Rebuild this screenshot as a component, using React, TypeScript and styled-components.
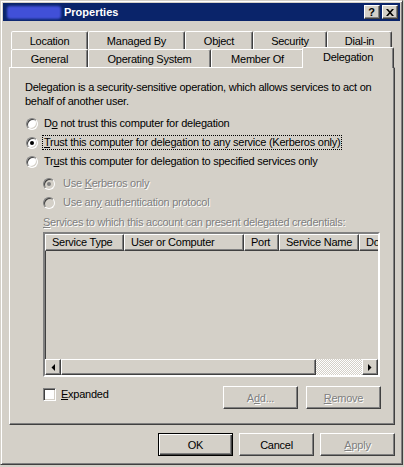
import React from 'react'
import styled, { createGlobalStyle, css } from 'styled-components'

const FACE = '#d4d0c8'
const SHADOW = '#808080'
const DARK = '#404040'
const HILITE = '#ffffff'
const CAPTION = '#0a246a'

const GlobalStyle = createGlobalStyle`
  html, body {
    margin: 0;
    padding: 0;
    background: ${FACE};
  }
  body {
    font-family: 'Liberation Sans', Arial, sans-serif;
    font-size: 11px;
    letter-spacing: -0.25px;
    color: #000;
  }
  * {
    box-sizing: border-box;
  }
`

const raised = css`
  border: 1px solid;
  border-color: ${HILITE} ${DARK} ${DARK} ${HILITE};
  box-shadow: inset -1px -1px ${SHADOW};
  background: ${FACE};
`

const sunken = css`
  border: 1px solid;
  border-color: ${SHADOW} ${HILITE} ${HILITE} ${SHADOW};
  box-shadow: inset 1px 1px ${DARK}, inset -1px -1px ${FACE};
`

const disabledText = css`
  color: ${SHADOW};
  text-shadow: 1px 1px 0 ${HILITE};
`

const rowOne = [
  { label: 'Location', width: 77 },
  { label: 'Managed By', width: 97 },
  { label: 'Object', width: 68 },
  { label: 'Security', width: 74 },
  { label: 'Dial-in', width: 65 },
]

const rowTwo = [
  { label: 'General', width: 77 },
  { label: 'Operating System', width: 123 },
  { label: 'Member Of', width: 93 },
  { label: 'Delegation', width: 88, active: true },
]

// last column is cut off by the list edge, as in the dialog
const columns = [
  { label: 'Service Type', width: 79 },
  { label: 'User or Computer', width: 120 },
  { label: 'Port', width: 35 },
  { label: 'Service Name', width: 80 },
  { label: 'Domain', width: 80 },
]

function Radio({ checked, disabled }: { checked?: boolean; disabled?: boolean }) {
  return (
    <RadioCircle $disabled={disabled}>
      {checked && <RadioDot $disabled={disabled} />}
    </RadioCircle>
  )
}

function Arrow({ dir }: { dir: 'left' | 'right' }) {
  return (
    <svg width="4" height="7" viewBox="0 0 4 7">
      {dir === 'left' ? <polygon points="4,0 4,7 0.5,3.5" fill="#000" /> : <polygon points="0,0 0,7 3.5,3.5" fill="#000" />}
    </svg>
  )
}

export default function App() {
  return (
    <>
      <GlobalStyle />
      <Window>
        <TitleBar>
          <Redacted />
          <TitleText>Properties</TitleText>
          <CaptionButtons>
            <CaptionButton>?</CaptionButton>
            <CaptionButton>
              <svg width="8" height="7" viewBox="0 0 8 7">
                <path d="M0 0h2l2 2.3L6 0h2L5 3.5 8 7H6L4 4.7 2 7H0l3-3.5z" fill="#000" />
              </svg>
            </CaptionButton>
          </CaptionButtons>
        </TitleBar>

        <Body>
          <TabStrip>
            <TabRow>
              {rowOne.map((t) => (
                <Tab key={t.label} $width={t.width}>
                  {t.label}
                </Tab>
              ))}
            </TabRow>
            <TabRow>
              {rowTwo.map((t) => (
                <Tab key={t.label} $width={t.width} $active={t.active}>
                  {t.label}
                </Tab>
              ))}
            </TabRow>
          </TabStrip>

          <Panel>
            <Description>
              Delegation is a security-sensitive operation, which allows services to act on behalf of another user.
            </Description>

            <Options>
              <Option>
                <Radio />
                <OptionText>
                  D<u>o</u> not trust this computer for delegation
                </OptionText>
              </Option>
              <Option>
                <Radio checked />
                <OptionText $focused>
                  <u>T</u>rust this computer for delegation to any service (Kerberos only)
                </OptionText>
              </Option>
              <Option>
                <Radio />
                <OptionText>
                  Tr<u>u</u>st this computer for delegation to specified services only
                </OptionText>
              </Option>
            </Options>

            <SubOptions>
              <Option $nested>
                <Radio checked disabled />
                <OptionText $disabled>
                  Use <u>K</u>erberos only
                </OptionText>
              </Option>
              <Option $nested>
                <Radio disabled />
                <OptionText $disabled>
                  Use an<u>y</u> authentication protocol
                </OptionText>
              </Option>
            </SubOptions>

            <ListLabel>
              <u>S</u>ervices to which this account can present delegated credentials:
            </ListLabel>

            <ListView>
              <ListHeader>
                {columns.map((c) => (
                  <HeaderCell key={c.label} $width={c.width}>
                    {c.label}
                  </HeaderCell>
                ))}
              </ListHeader>
              <ListBody />
              <HScroll>
                <ScrollButton>
                  <Arrow dir="left" />
                </ScrollButton>
                <ScrollThumb />
                <ScrollTrack />
                <ScrollButton>
                  <Arrow dir="right" />
                </ScrollButton>
              </HScroll>
            </ListView>

            <PanelFooter>
              <CheckLabel>
                <CheckBox />
                <span>
                  <u>E</u>xpanded
                </span>
              </CheckLabel>
              <ButtonGroup $gap={8}>
                <PushButton disabled>
                  A<u>d</u>d...
                </PushButton>
                <PushButton disabled>
                  <u>R</u>emove
                </PushButton>
              </ButtonGroup>
            </PanelFooter>
          </Panel>

          <DialogButtons>
            <ButtonGroup $gap={6}>
              <PushButton $default>OK</PushButton>
              <PushButton>Cancel</PushButton>
              <PushButton disabled>
                <u>A</u>pply
              </PushButton>
            </ButtonGroup>
          </DialogButtons>
        </Body>
      </Window>
    </>
  )
}

const Window = styled.div`
  width: 403px;
  height: 465px;
  padding: 2px;
  border: 1px solid;
  border-color: ${FACE} ${DARK} ${DARK} ${FACE};
  box-shadow: inset 1px 1px ${HILITE}, inset -1px -1px ${SHADOW};
  background: ${FACE};
  display: flex;
  flex-direction: column;
`

const TitleBar = styled.div`
  height: 18px;
  background: ${CAPTION};
  display: flex;
  align-items: center;
`

const Redacted = styled.span`
  width: 54px;
  height: 13px;
  margin-left: 4px;
  background: #4150d8;
  border-radius: 3px;
  filter: blur(1px);
`

const TitleText = styled.span`
  margin-left: 3px;
  color: #fff;
  font-weight: bold;
  font-size: 11px;
  letter-spacing: 0;
`

const CaptionButtons = styled.div`
  margin-left: auto;
  margin-right: 2px;
  display: flex;
  gap: 2px;
`

const CaptionButton = styled.div`
  ${raised}
  width: 16px;
  height: 14px;
  display: flex;
  align-items: center;
  justify-content: center;
  font-weight: bold;
  font-size: 11px;
  line-height: 12px;
  padding-right: 1px;
`

const Body = styled.div`
  flex: 1;
  display: flex;
  flex-direction: column;
  padding: 10px 5px 0 6px;
`

const TabStrip = styled.div`
  padding-left: 2px;
`

const TabRow = styled.div`
  display: flex;
  height: 18px;
`

const Tab = styled.div<{ $width: number; $active?: boolean }>`
  flex: none;
  width: ${(p) => p.$width}px;
  height: 18px;
  padding-top: 2px;
  line-height: 14px;
  text-align: center;
  white-space: nowrap;
  background: ${FACE};
  border: 1px solid;
  border-bottom: none;
  border-color: ${HILITE} ${DARK} transparent ${HILITE};
  border-radius: 2px 2px 0 0;
  box-shadow: inset -1px 0 ${SHADOW};

  ${(p) =>
    p.$active &&
    css`
      position: relative;
      z-index: 1;
      width: ${p.$width + 4}px;
      height: 21px;
      margin: -2px -2px 0;
    `}
`

const Panel = styled.div`
  height: 358px;
  padding: 12px 14px 0 15px;
  border: 1px solid;
  border-color: ${HILITE} ${DARK} ${DARK} ${HILITE};
  box-shadow: inset -1px -1px ${SHADOW};
  display: flex;
  flex-direction: column;
`

const Description = styled.p`
  margin: 0;
  line-height: 14px;
`

const Options = styled.div`
  margin-top: 6px;
`

const SubOptions = styled.div`
  margin-top: 3px;
`

const Option = styled.div<{ $nested?: boolean }>`
  height: 19px;
  display: flex;
  align-items: center;
  gap: ${(p) => (p.$nested ? 6 : 4)}px;
  padding-left: ${(p) => (p.$nested ? 18 : 1)}px;
`

const OptionText = styled.span<{ $focused?: boolean; $disabled?: boolean }>`
  line-height: 13px;
  padding: 0 1px;
  border: 1px dotted ${(p) => (p.$focused ? '#000' : 'transparent')};
  ${(p) => p.$disabled && disabledText}
`

const RadioCircle = styled.span<{ $disabled?: boolean }>`
  flex: none;
  width: 12px;
  height: 12px;
  border-radius: 50%;
  ${sunken}
  background: ${(p) => (p.$disabled ? FACE : '#fff')};
  display: flex;
  align-items: center;
  justify-content: center;
`

const RadioDot = styled.span<{ $disabled?: boolean }>`
  width: 4px;
  height: 4px;
  border-radius: 50%;
  background: ${(p) => (p.$disabled ? SHADOW : '#000')};
`

const ListLabel = styled.div`
  margin-top: 3px;
  margin-left: 18px;
  line-height: 14px;
  ${disabledText}
`

const ListView = styled.div`
  margin-top: 3px;
  margin-left: 18px;
  height: 145px;
  border: 2px solid;
  border-color: ${SHADOW} ${HILITE} ${HILITE} ${SHADOW};
  box-shadow: inset 1px 1px ${DARK}, inset -1px -1px ${FACE};
  display: flex;
  flex-direction: column;
  overflow: hidden;
`

const ListHeader = styled.div`
  display: flex;
  height: 17px;
  flex: none;
`

const HeaderCell = styled.div<{ $width: number }>`
  ${raised}
  flex: none;
  width: ${(p) => p.$width}px;
  height: 17px;
  padding-left: 6px;
  line-height: 14px;
  white-space: nowrap;
  overflow: hidden;
`

const ListBody = styled.div`
  flex: 1;
`

const HScroll = styled.div`
  flex: none;
  height: 16px;
  display: flex;
`

const ScrollButton = styled.div`
  ${raised}
  flex: none;
  width: 16px;
  height: 16px;
  display: flex;
  align-items: center;
  justify-content: center;
`

const ScrollThumb = styled.div`
  ${raised}
  flex: none;
  width: 255px;
  height: 16px;
`

const ScrollTrack = styled.div`
  flex: 1;
  background: repeating-conic-gradient(${HILITE} 0 25%, ${FACE} 0 50%) 0 0 / 2px 2px;
`

const PanelFooter = styled.div`
  margin-top: 9px;
  margin-left: 18px;
  margin-right: -1px;
  display: flex;
  align-items: flex-start;
  justify-content: space-between;
`

const CheckLabel = styled.label`
  display: flex;
  align-items: center;
  gap: 5px;
  margin-top: 2px;
  line-height: 13px;
`

const CheckBox = styled.span`
  width: 13px;
  height: 13px;
  ${sunken}
  background: #fff;
`

const ButtonGroup = styled.div<{ $gap: number }>`
  display: flex;
  gap: ${(p) => p.$gap}px;
`

const PushButton = styled.button<{ $default?: boolean }>`
  width: 75px;
  height: 23px;
  padding: 0;
  font: inherit;
  letter-spacing: inherit;
  color: #000;
  background: ${FACE};
  border: 1px solid;
  border-color: ${HILITE} ${DARK} ${DARK} ${HILITE};
  box-shadow: inset -1px -1px ${SHADOW};

  ${(p) =>
    p.$default &&
    css`
      border-color: #000;
      box-shadow: inset 1px 1px ${HILITE}, inset -1px -1px ${DARK}, inset -2px -2px ${SHADOW};
    `}

  &:disabled {
    ${disabledText}
  }
`

const DialogButtons = styled.div`
  margin-top: 8px;
  display: flex;
  justify-content: flex-end;
`
